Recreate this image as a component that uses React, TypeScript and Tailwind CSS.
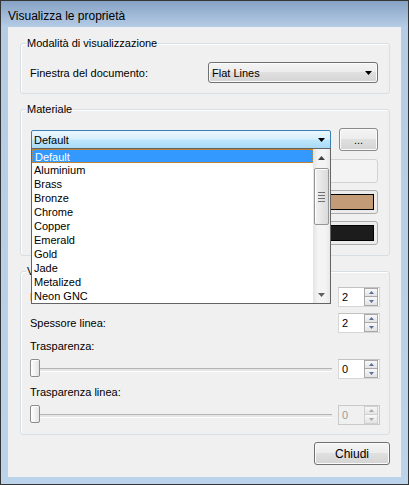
import React from 'react';

const FONT = "font-['Liberation_Sans',Arial,sans-serif]";

const MATERIALS = [
  'Default',
  'Aluminium',
  'Brass',
  'Bronze',
  'Chrome',
  'Copper',
  'Emerald',
  'Gold',
  'Jade',
  'Metalized',
  'Neon GNC',
];

function Tri({ up = false, w = 7, h = 4, className = '' }: { up?: boolean; w?: number; h?: number; className?: string }) {
  const d = up ? `M0 ${h}H${w}L${w / 2} 0Z` : `M0 0H${w}L${w / 2} ${h}Z`;
  return (
    <svg width={w} height={h} viewBox={`0 0 ${w} ${h}`} className={className}>
      <path d={d} fill="currentColor" />
    </svg>
  );
}

function GroupBox({ title, className = '', children }: { title: string; className?: string; children?: React.ReactNode }) {
  return (
    <div className={`relative rounded-[3px] border border-[#d5dfe5] shadow-[inset_1px_1px_0_#fff] ${className}`}>
      <span className="absolute -top-[8px] left-[5px] bg-[#f0f0f0] px-[1px] leading-[14px] whitespace-nowrap">{title}</span>
      {children}
    </div>
  );
}

function SpinBox({ value, disabled = false }: { value: string; disabled?: boolean }) {
  return (
    <div
      className={`flex h-[20px] w-[42px] shrink-0 items-center border ${
        disabled ? 'border-[#c9c9c9] bg-[#f0f0f0] text-[#9a9a9a]' : 'border-[#d6d6d6] border-t-[#c2c2c2] bg-white text-black'
      }`}
    >
      <span className="pl-[3px] leading-[14px]">{value}</span>
      <div className="ml-auto mr-[1px] flex h-[18px] w-[14px] flex-col">
        <div
          className={`flex h-[9px] items-center justify-center border ${
            disabled ? 'border-[#d0d0d0] text-[#a8a8a8]' : 'border-[#a8a8a8] text-[#5a6f96]'
          } bg-[linear-gradient(to_bottom,#f8f8f8,#e3e3e3)]`}
        >
          <Tri up w={5} h={3} />
        </div>
        <div
          className={`flex h-[9px] items-center justify-center border border-t-0 ${
            disabled ? 'border-[#d0d0d0] text-[#a8a8a8]' : 'border-[#a8a8a8] text-[#5a6f96]'
          } bg-[linear-gradient(to_bottom,#f8f8f8,#e3e3e3)]`}
        >
          <Tri w={5} h={3} />
        </div>
      </div>
    </div>
  );
}

function Slider() {
  return (
    <div className="relative flex h-[20px] flex-1 items-center">
      <div className="h-[3px] w-full border-t border-[#b4b4b4] bg-[#e6e6e6] shadow-[0_1px_0_#fff]" />
      <div className="absolute left-0 top-0 h-[18px] w-[10px] rounded-[2px] border border-[#8c8c8c] bg-[linear-gradient(to_right,#ffffff,#e4e4e4)] shadow-[inset_1px_1px_0_#fff]" />
    </div>
  );
}

function Swatch({ color }: { color: string }) {
  return (
    <div className="mt-[7px] flex h-[24px] rounded-[3px] border border-[#adadad] bg-[#ececec] p-[3px]">
      <div className="flex-1 border border-black" style={{ background: color }} />
    </div>
  );
}

function DropList() {
  return (
    <div className="absolute left-[10px] top-[38px] z-10 flex h-[156px] w-[300px] border border-[#646464] bg-white">
      <div className="flex-1">
        {MATERIALS.map((m, i) => (
          <div
            key={m}
            className={`h-[14px] pl-[2px] leading-[14px] ${
              i === 0 ? 'border border-dotted border-[#c88a3c] bg-[#3399ff] pl-[1px] leading-[12px] text-white' : 'text-black'
            }`}
          >
            {m}
          </div>
        ))}
      </div>
      <div className="flex w-[17px] flex-col bg-[linear-gradient(to_right,#e4e4e4,#f4f4f4_30%,#f4f4f4_70%,#e9e9e9)]">
        <div className="flex h-[17px] items-center justify-center text-[#404040]">
          <Tri up w={7} h={4} />
        </div>
        <div className="flex-1">
          <div className="mx-auto mt-[2px] flex h-[57px] w-[15px] flex-col items-center justify-center gap-[2px] rounded-[2px] border border-[#959595] bg-[linear-gradient(to_right,#f2f2f2,#dadada)] shadow-[inset_1px_1px_0_#fff]">
            <div className="h-px w-[7px] bg-[#6e6e6e]" />
            <div className="h-px w-[7px] bg-[#6e6e6e]" />
            <div className="h-px w-[7px] bg-[#6e6e6e]" />
            <div className="h-px w-[7px] bg-[#6e6e6e]" />
          </div>
        </div>
        <div className="flex h-[17px] items-center justify-center text-[#606060]">
          <Tri w={7} h={4} />
        </div>
      </div>
    </div>
  );
}

export default function App() {
  return (
    <div
      className={`${FONT} h-[485px] w-[409px] border border-[#353535] bg-[linear-gradient(to_bottom,#86a2c4,#b5cce6_26px,#bcd3ec)] text-[11px] text-black`}
    >
      {/* title bar */}
      <div className="flex h-[26px] items-end pb-[4px] pl-[7px] text-[12px] leading-[14px]">Visualizza le proprietà</div>

      {/* client area */}
      <div className="mx-[7px] h-[450px] bg-[#f0f0f0] pl-[12px] pr-[11px] pt-[16px]">
        <GroupBox title="Modalità di visualizzazione" className="h-[51px] pl-[9px] pr-[11px] pt-[18px]">
          <div className="flex h-[21px] items-center">
            <span className="leading-[14px]">Finestra del documento:</span>
            <div className="ml-auto flex h-[21px] w-[170px] items-center justify-between rounded-[3px] border border-[#707070] bg-[linear-gradient(to_bottom,#f4f4f4,#ececec_50%,#e0e0e0_50%,#d4d4d4)] pl-[3px] pr-[5px] shadow-[inset_0_0_0_1px_#fbfbfb]">
              <span className="leading-[14px]">Flat Lines</span>
              <Tri />
            </div>
          </div>
        </GroupBox>

        <GroupBox title="Materiale" className="mt-[15px] h-[147px] pl-[10px] pr-[11px] pt-[18px]">
          <div className="flex h-[23px] items-center gap-[8px]">
            <div className="flex h-[20px] w-[300px] items-center justify-between rounded-[2px] border border-[#3c7fb1] bg-[linear-gradient(to_bottom,#eaf6fd,#d9f0fc_45%,#bee6fd_50%,#a7d9f5)] pl-[2px] pr-[5px]">
              <span className="leading-[14px]">Default</span>
              <Tri />
            </div>
            <div className="flex h-[23px] flex-1 items-center justify-center rounded-[3px] border border-[#8a8a8a] bg-[linear-gradient(to_bottom,#f4f4f4,#ececec_50%,#e0e0e0_50%,#d4d4d4)] leading-[14px] shadow-[inset_0_0_0_1px_#fbfbfb]">
              ...
            </div>
          </div>
          <div className="mt-[8px] h-[24px] rounded-[3px] border border-[#d2d2d2] bg-[#f3f3f3]" />
          <Swatch color="#c49b77" />
          <Swatch color="#1c1c1c" />
          <DropList />
        </GroupBox>

        <GroupBox title="Visualizzazione" className="mt-[15px] h-[164px] pl-[9px] pr-[9px] pt-[15px]">
          <div className="flex h-[20px] items-center justify-between">
            <span className="leading-[14px]">Dimensione punto:</span>
            <SpinBox value="2" />
          </div>
          <div className="mt-[6px] flex h-[20px] items-center justify-between">
            <span className="leading-[14px]">Spessore linea:</span>
            <SpinBox value="2" />
          </div>
          <div className="mt-[6px] h-[14px] leading-[14px]">Trasparenza:</div>
          <div className="mt-[6px] flex h-[20px] items-center gap-[6px]">
            <Slider />
            <SpinBox value="0" />
          </div>
          <div className="mt-[6px] h-[14px] leading-[14px]">Trasparenza linea:</div>
          <div className="mt-[6px] flex h-[20px] items-center gap-[6px]">
            <Slider />
            <SpinBox value="0" disabled />
          </div>
        </GroupBox>

        <div className="mt-[7px] flex justify-end">
          <div className="flex h-[23px] w-[76px] items-center justify-center rounded-[3px] border border-[#707070] bg-[linear-gradient(to_bottom,#f4f4f4,#ececec_50%,#e0e0e0_50%,#d4d4d4)] text-[12px] leading-[14px] shadow-[inset_0_0_0_1px_#fbfbfb]">
            Chiudi
          </div>
        </div>
      </div>
    </div>
  );
}
